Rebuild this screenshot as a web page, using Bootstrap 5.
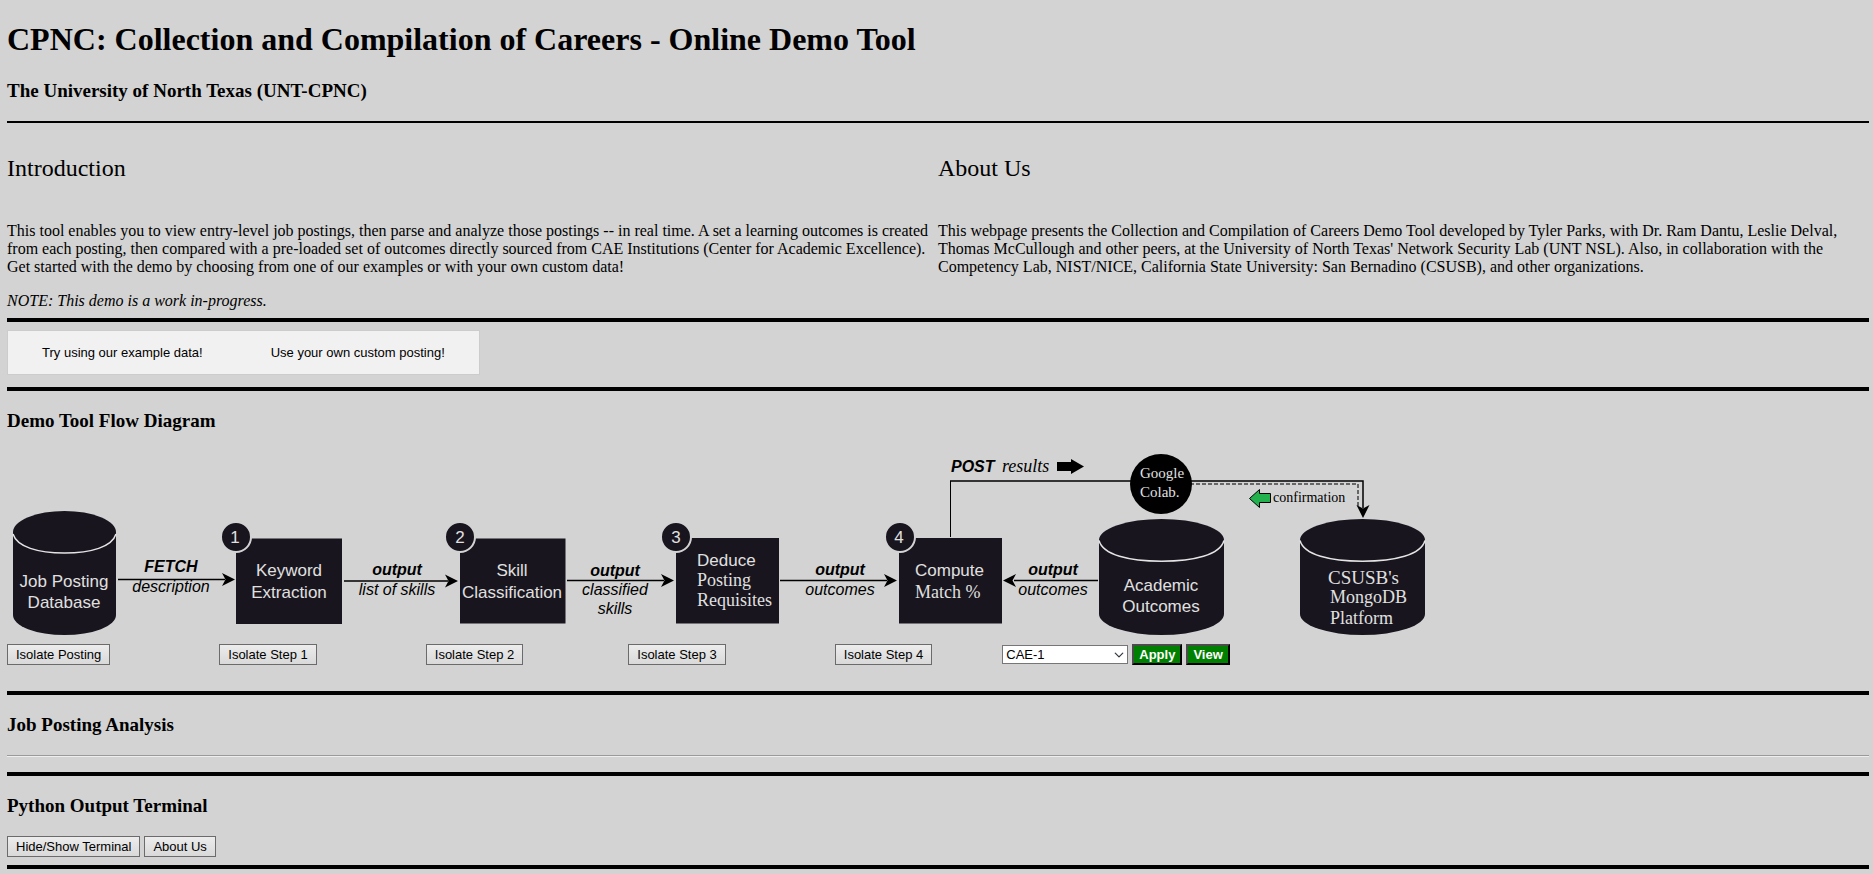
<!DOCTYPE html>
<html lang="en">
<head>
<meta charset="utf-8">
<meta name="viewport" content="width=device-width, initial-scale=1">
<title>CPNC Online Demo Tool</title>
<link href="https://cdn.jsdelivr.net/npm/bootstrap@5.3.0/dist/css/bootstrap.min.css" rel="stylesheet">
<style>
body { background: #d3d3d3; color: #000; font-family: "Liberation Serif", "Times New Roman", serif; font-size: 16px; line-height: 18px; }
.page { padding: 21px 4px 4px 7px; }
h1 { font-size: 32px; line-height: 37px; font-weight: 700; margin: 0 0 22px; }
h3 { font-size: 19px; line-height: 22px; font-weight: 700; margin: 19px 0; }
.intro { padding-top: 31px; }
.intro-title { font-size: 24px; line-height: 28px; margin: 0 0 40px; font-weight: 400; }
.rule { border: 0; opacity: 1; background: #000; height: 4px; margin: 0; }
.rule-thin { height: 2px; }
.rule-inset { border: 0; border-top: 1px solid #9a9a9a; border-bottom: 1px solid #eee; opacity: 1; margin: 0 0 15px; }
.tabs { background: #f1f1f1; border: 1px solid #ccc; margin: 8px 0 12px; }
.tabs button { border: 0; background: none; padding: 12px 34px; font: 13px/19px "Liberation Sans", Arial, sans-serif; color: #000; }
.tool-btn, .go-btn, .outcome-select { font: 13px/15px "Liberation Sans", Arial, sans-serif; border-radius: 0; color: #000; }
.tool-btn { padding: 2px 8px; border: 1px solid #6b6b6b; background: linear-gradient(#ececec, #d9d9d9); }
.go-btn { padding: 1px 5px; border: 2px outset #000; border-color: #4c4c4c #000 #000 #4c4c4c; background: green; color: #fff; font-weight: 700; }
.outcome-select { width: 126px; height: 19px; min-height: 0; padding: 0 20px 0 3px; border: 1px solid #767676; background-color: #fff; background-position: right 3px center; background-size: 10px 10px; line-height: 17px; }
.steps { margin: 4px 0 26px; column-gap: 70px; }
.step-group { column-gap: 109px; }
.step-group + .step-group { margin-left: 35px; }
.flow { display: block; width: 1425px; max-width: 100%; height: auto; margin-top: -6px; }
.flow .ink { fill: #18151e; }
.flow .sans { font: 17px "Liberation Sans", Arial, sans-serif; fill: #e0e0e0; }
.flow .serif { font: 18px "Liberation Serif", serif; fill: #e0e0e0; }
.flow .verb { font: italic 700 16px "Liberation Sans", Arial, sans-serif; }
.flow .noun { font: italic 16px "Liberation Sans", Arial, sans-serif; }
.flow .colab { font-size: 15px; }
.flow .owner { font-size: 19px; }
.flow .mid { text-anchor: middle; }
.flow .wire { stroke: #000; stroke-width: 1.5; fill: none; }
.flow .seam { stroke: #e4e4e4; stroke-width: 1.5; fill: none; }
.flow .ring { fill: #18151e; stroke: #d3d3d3; stroke-width: 2; }
</style>
</head>
<body>
<div class="container-fluid page">
  <header>
    <h1>CPNC: Collection and Compilation of Careers - Online Demo Tool</h1>
    <h3>The University of North Texas (UNT-CPNC)</h3>
  </header>
  <hr class="rule rule-thin">

  <div class="row g-0 intro">
    <section class="col-6">
      <h2 class="intro-title">Introduction</h2>
      <p class="mb-3">This tool enables you to view entry-level job postings, then parse and analyze those postings -- in real time. A set a learning outcomes is created from each posting, then compared with a pre-loaded set of outcomes directly sourced from CAE Institutions (Center for Academic Excellence). Get started with the demo by choosing from one of our examples or with your own custom data!</p>
      <p class="mb-2"><em>NOTE: This demo is a work in-progress.</em></p>
    </section>
    <section class="col-6">
      <h2 class="intro-title">About Us</h2>
      <p class="mb-0">This webpage presents the Collection and Compilation of Careers Demo Tool developed by Tyler Parks, with Dr. Ram Dantu, Leslie Delval, Thomas McCullough and other peers, at the University of North Texas' Network Security Lab (UNT NSL). Also, in collaboration with the Competency Lab, NIST/NICE, California State University: San Bernadino (CSUSB), and other organizations.</p>
    </section>
  </div>
  <hr class="rule">

  <div class="d-flex"><div class="tabs d-flex">
    <button type="button">Try using our example data!</button>
    <button type="button">Use your own custom posting!</button>
  </div></div>
  <hr class="rule">

  <h3>Demo Tool Flow Diagram</h3>
  <svg class="flow" viewBox="7 445 1425 195" role="img" aria-label="Demo tool flow diagram">
    <defs>
      <path id="head" d="M0 0L-13 -6.5L-9.500 0L-13 6.500Z"/>
      <g id="drum">
        <path class="ink" d="M0 21A62.500 21 0 0 1 125 21V95A62.500 21 0 0 1 0 95Z"/>
        <path class="seam" d="M0 21.500C4 36 30 42.200 62.500 42.200S121 36 125 21.500"/>
      </g>
    </defs>

    <!-- job posting database -->
    <path class="ink" d="M13 532A51.500 21 0 0 1 116 532V615A51.500 20 0 0 1 13 615Z"/>
    <path class="seam" d="M13 534C17 547 38 553 64.500 553S112 547 116 534"/>
    <g class="sans mid"><text x="64" y="587">Job Posting</text><text x="64" y="608">Database</text></g>

    <!-- process boxes -->
    <g class="ink">
      <rect x="236" y="538.500" width="106" height="85.500"/>
      <rect x="460" y="538.500" width="105.500" height="85"/>
      <rect x="676" y="538" width="103" height="85.500"/>
      <rect x="899" y="538" width="103" height="85.500"/>
    </g>
    <g class="ring"><circle cx="236" cy="537" r="15"/><circle cx="460" cy="537" r="15"/><circle cx="676" cy="537" r="15"/><circle cx="900" cy="537" r="15"/></g>
    <g class="sans mid">
      <text x="235" y="543">1</text><text x="460" y="543">2</text><text x="676" y="543">3</text><text x="899" y="543">4</text>
      <text x="289" y="576">Keyword</text><text x="289" y="598">Extraction</text>
      <text x="512" y="576">Skill</text><text x="512" y="598">Classification</text>
    </g>
    <g class="sans"><text x="697" y="566">Deduce</text><text x="915" y="576">Compute</text></g>
    <g class="serif"><text x="697" y="586">Posting</text><text x="697" y="606">Requisites</text><text x="915" y="598">Match %</text></g>

    <!-- connecting arrows -->
    <g class="wire"><path d="M118 579.500H225M344 581H448M567 580.500H664M780 580.500H887M1014 580.500H1098"/></g>
    <use href="#head" x="235" y="579.500"/><use href="#head" x="458" y="581"/><use href="#head" x="674" y="580.500"/><use href="#head" x="897" y="580.500"/>
    <use href="#head" transform="translate(1003 580.500) rotate(180)"/>
    <g class="mid">
      <g class="verb"><text x="171" y="572">FETCH</text><text x="397" y="575">output</text><text x="615" y="576">output</text><text x="840" y="575">output</text><text x="1053" y="575">output</text></g>
      <g class="noun"><text x="171" y="592">description</text><text x="397" y="595">list of skills</text><text x="615" y="595">classified</text><text x="615" y="614">skills</text><text x="840" y="595">outcomes</text><text x="1053" y="595">outcomes</text></g>
    </g>

    <!-- results posted to Colab and on to the platform -->
    <path d="M950.500 537V481" fill="none" stroke="#000"/>
    <path d="M950 481H1363V508" fill="none" stroke="#000" stroke-width="1.500"/>
    <path d="M1190 484H1358V506" fill="none" stroke="#666" stroke-width="2" stroke-dasharray="4 2"/>
    <use href="#head" transform="translate(1363 518) rotate(90)"/>
    <ellipse cx="1161" cy="484" rx="31" ry="30"/>
    <g class="serif"><text class="colab" x="1140" y="478">Google</text><text class="colab" x="1140" y="497">Colab.</text></g>
    <text class="verb" x="951" y="472">POST</text>
    <text x="1002" y="472" font-size="18" font-style="italic">results</text>
    <path d="M1057 462H1071V459L1084 466.500L1071 474V471H1057Z"/>
    <path d="M1249.500 498.500L1259.500 489.500V493.500H1270.500V502.500H1259.500V507.500Z" fill="#22b14c" stroke="#000"/>
    <text x="1273" y="502" font-size="14">confirmation</text>

    <use href="#drum" x="1099" y="519"/>
    <g class="sans mid"><text x="1161" y="591">Academic</text><text x="1161" y="612">Outcomes</text></g>
    <use href="#drum" x="1300" y="519"/>
    <g class="serif"><text class="owner" x="1328" y="584">CSUSB's</text><text x="1330" y="603">MongoDB</text><text x="1330" y="624">Platform</text></g>
  </svg>

  <div class="steps d-flex flex-wrap align-items-center">
    <div class="step-group d-flex">
      <button type="button" class="tool-btn">Isolate Posting</button>
      <button type="button" class="tool-btn">Isolate Step 1</button>
      <button type="button" class="tool-btn">Isolate Step 2</button>
    </div>
    <div class="step-group d-flex">
      <button type="button" class="tool-btn">Isolate Step 3</button>
      <button type="button" class="tool-btn">Isolate Step 4</button>
    </div>
    <div class="d-flex align-items-center gap-1">
      <select class="form-select outcome-select" aria-label="Academic outcomes"><option>CAE-1</option><option>CAE-2</option></select>
      <button type="button" class="go-btn">Apply</button>
      <button type="button" class="go-btn">View</button>
    </div>
  </div>
  <hr class="rule">

  <h3>Job Posting Analysis</h3>
  <hr class="rule-inset">
  <hr class="rule">

  <h3>Python Output Terminal</h3>
  <div class="d-flex gap-1 mb-2">
    <button type="button" class="tool-btn">Hide/Show Terminal</button>
    <button type="button" class="tool-btn">About Us</button>
  </div>
  <hr class="rule">
</div>
<script src="https://cdn.jsdelivr.net/npm/bootstrap@5.3.0/dist/js/bootstrap.bundle.min.js"></script>
</body>
</html>
